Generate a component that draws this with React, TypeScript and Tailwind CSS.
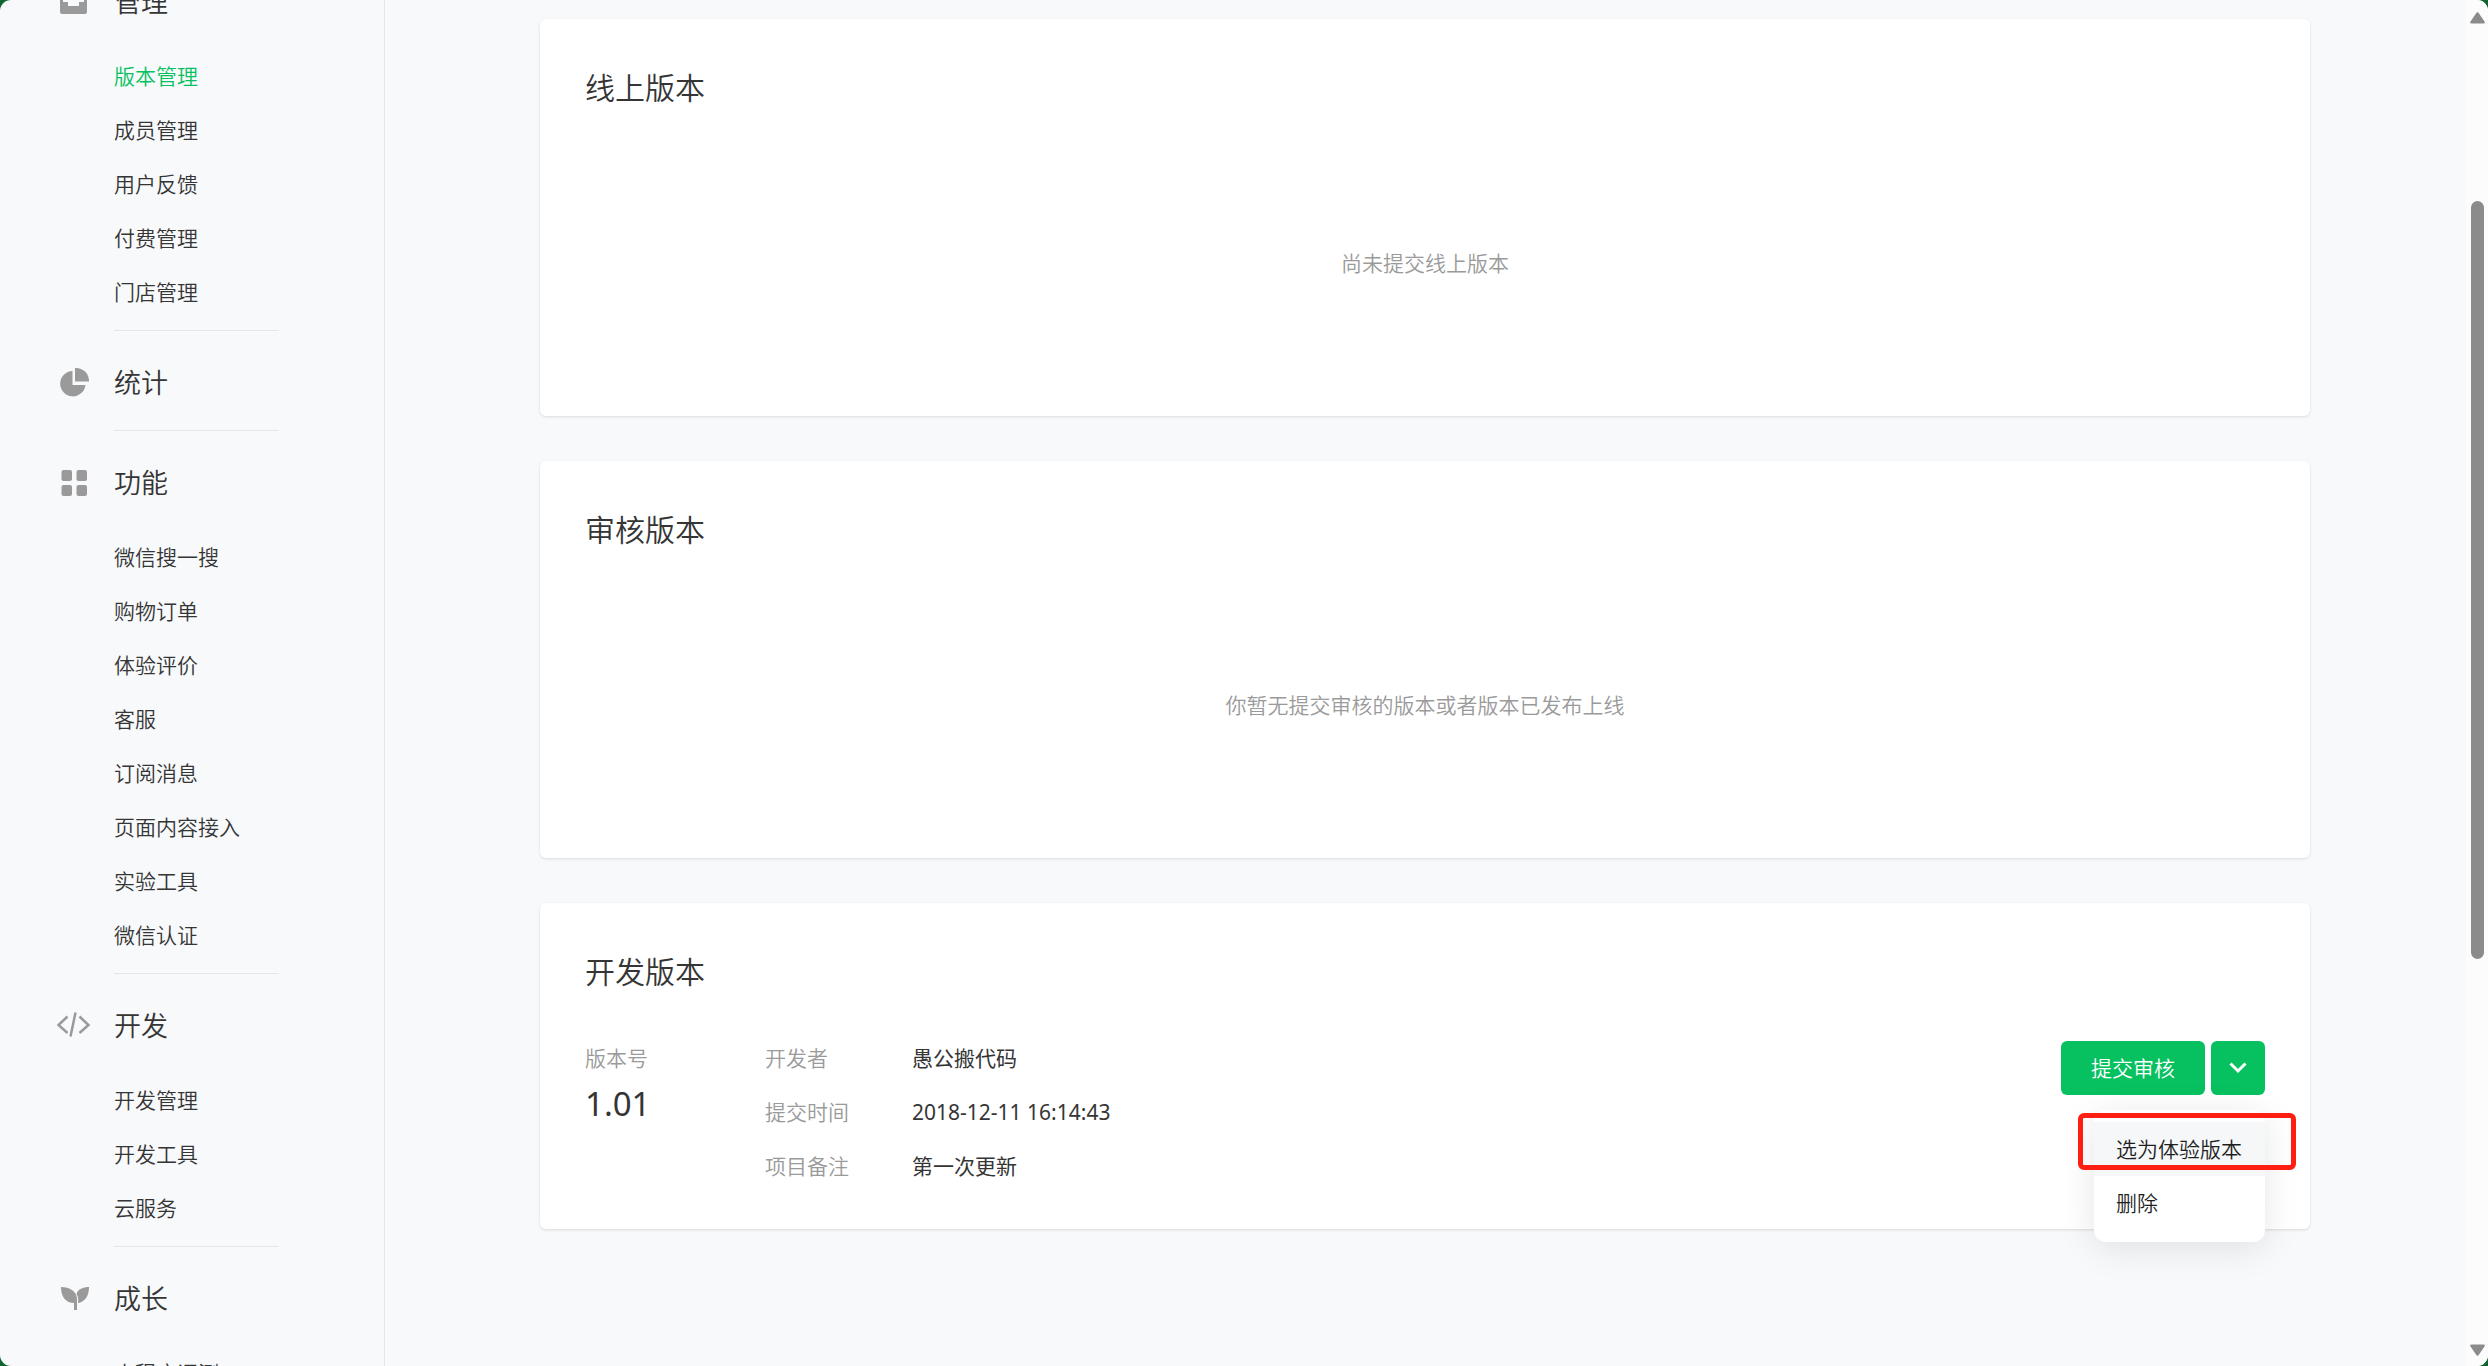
import { useState } from 'react'
import type { ReactNode } from 'react'

interface NavGroup {
  title: string
  icon: ReactNode
  items: string[]
}

interface VersionCardProps {
  title: string
  children: ReactNode
}

const navGroups: NavGroup[] = [
  {
    title: '管理',
    icon: (
      <path
        fillRule="evenodd"
        d="M2 1h23a2 2 0 0 1 2 2v22a2 2 0 0 1-2 2H2a2 2 0 0 1-2-2V3a2 2 0 0 1 2-2zM3 4v11h5v4h11v-4h5V4z"
      />
    ),
    items: ['版本管理', '成员管理', '用户反馈', '付费管理', '门店管理'],
  },
  {
    title: '统计',
    icon: (
      <>
        <path d="M12.500 3v14h13A12.700 12.700 0 1 1 12.500 3z" />
        <path d="M15 0a13 13 0 0 1 14 13.500H15z" />
      </>
    ),
    items: [],
  },
  {
    title: '功能',
    icon: (
      <>
        <rect x="1.500" y="2" width="10.500" height="11" rx="2" />
        <rect x="16.500" y="2" width="10.500" height="11" rx="2" />
        <rect x="1.500" y="17" width="10.500" height="11" rx="2" />
        <rect x="16.500" y="17" width="10.500" height="11" rx="2" />
      </>
    ),
    items: [
      '微信搜一搜',
      '购物订单',
      '体验评价',
      '客服',
      '订阅消息',
      '页面内容接入',
      '实验工具',
      '微信认证',
    ],
  },
  {
    title: '开发',
    icon: (
      <path
        d="M7.500 5.500L-1.500 14L7.500 22M15.500 1.500L10.500 25.500M19.500 5.500L28.500 14L19.500 22"
        fill="none"
        stroke="currentColor"
        strokeWidth="2.500"
      />
    ),
    items: ['开发管理', '开发工具', '云服务'],
  },
  {
    title: '成长',
    icon: (
      <>
        <path d="M1 3c9 0 15 4 16 11v12h-3v-7C6 19 1 13 1 3z" />
        <path d="M29 3c0 9-4 15-11 16C18.500 15 18 12 16.500 10C18 5 23 3 29 3z" />
      </>
    ),
    items: ['小程序评测'],
  },
]

const versionFields = [
  { label: '开发者', value: '愚公搬代码' },
  { label: '提交时间', value: '2018-12-11 16:14:43' },
  { label: '项目备注', value: '第一次更新' },
]

function Sidebar() {
  return (
    <nav className="w-[385px] shrink-0 overflow-hidden border-r border-[#e4e6e9]">
      <div className="-mt-[25px]">
        {navGroups.map((group, index) => (
          <section key={group.title} className="pl-[60px]">
            {index > 0 && <hr className="mb-[25px] ml-[54px] w-[165px] border-[#e4e6e9]" />}
            <h2 className="mb-5 flex h-[54px] items-center text-[27px] text-[#353535]">
              <svg
                viewBox="0 0 30 30"
                className="mr-6 h-[30px] w-[30px] overflow-visible text-[#9a9a9a]"
                fill="currentColor"
              >
                {group.icon}
              </svg>
              {group.title}
            </h2>
            {group.items.length > 0 && (
              <ul className="mb-[11px] ml-[54px]">
                {group.items.map((item) => (
                  <li key={item} className="flex h-[54px] items-center">
                    <a
                      href="#"
                      className={item === '版本管理' ? 'text-[#07c160]' : 'text-[#353535]'}
                    >
                      {item}
                    </a>
                  </li>
                ))}
              </ul>
            )}
          </section>
        ))}
      </div>
    </nav>
  )
}

function VersionCard({ title, children }: VersionCardProps) {
  return (
    <section className="rounded-md bg-white px-[45px] pt-[45px] pb-[46px] shadow-[0_1px_3px_rgba(0,0,0,0.12)]">
      <h2 className="text-[30px] leading-[48px] text-[#353535]">{title}</h2>
      {children}
    </section>
  )
}

function EmptyVersion({ text }: { text: string }) {
  return (
    <p className="flex h-[258px] items-center justify-center pt-11 text-[#9a9a9a]">{text}</p>
  )
}

function VersionActions() {
  const [open, setOpen] = useState(true)

  return (
    <div className="relative flex gap-1.5 self-start">
      <button type="button" className="h-[54px] w-36 rounded-md bg-[#07c160] text-white">
        提交审核
      </button>
      <button
        type="button"
        aria-label="更多操作"
        aria-expanded={open}
        onClick={() => setOpen(!open)}
        className="flex h-[54px] w-[54px] items-center justify-center rounded-md bg-[#07c160] text-white"
      >
        <svg viewBox="0 0 18 12" className="h-3 w-[18px]" fill="none" stroke="currentColor">
          <path d="M1.500 1.500L9 9L16.500 1.500" strokeWidth="3" />
        </svg>
      </button>
      {open && (
        <div className="absolute top-[69px] right-0 w-[171px] rounded-xl bg-white py-3 shadow-[0_6px_36px_rgba(0,0,0,0.1)]">
          <button
            type="button"
            className="h-[54px] w-full bg-[#f6f7f9] pl-[22px] text-left text-[#1f1f1f]"
          >
            选为体验版本
          </button>
          <button type="button" className="h-[54px] w-full pl-[22px] text-left text-[#1f1f1f]">
            删除
          </button>
          <div className="pointer-events-none absolute top-[3px] -right-[31px] h-[57px] w-[218px] rounded-md border-[5px] border-[#ff1e12]" />
        </div>
      )}
    </div>
  )
}

function Scrollbar() {
  return (
    <div className="flex w-[22px] shrink-0 flex-col items-center bg-[#fcfcfc] pt-3 pb-[10px] text-[#8b8b8b]">
      <svg viewBox="0 0 15 12" className="h-3 w-[15px]" fill="currentColor">
        <path d="M6 1.500q1.500-2.500 3 0l5.500 8q1 2-1 2h-12q-2 0-1-2z" />
      </svg>
      <div className="flex w-full flex-1 flex-col items-center pt-[177px]">
        <div className="h-[66.3%] w-[13px] rounded-full bg-[#8b8b8b]" />
      </div>
      <svg viewBox="0 0 15 12" className="h-3 w-[15px]" fill="currentColor">
        <path d="M6 10.500q1.500 2.500 3 0l5.500-8q1-2-1-2h-12q-2 0-1 2z" />
      </svg>
    </div>
  )
}

export default function App() {
  return (
    <div className="h-screen bg-[#0f6430] font-['Noto_Sans','Noto_Sans_CJK_SC',sans-serif] text-[21px] leading-[34px] font-[350]">
      <div className="flex h-full overflow-hidden rounded-[11px] bg-[#f8f9fb]">
        <Sidebar />
        <main className="flex min-w-0 flex-1 flex-col gap-[45px] pt-[19px] pr-[156px] pl-[155px]">
          <VersionCard title="线上版本">
            <EmptyVersion text="尚未提交线上版本" />
          </VersionCard>
          <VersionCard title="审核版本">
            <EmptyVersion text="你暂无提交审核的版本或者版本已发布上线" />
          </VersionCard>
          <VersionCard title="开发版本">
            <div className="mt-[45px] flex">
              <div className="w-[180px]">
                <p className="text-[#9a9a9a]">版本号</p>
                <p className="mt-0.5 text-[33px] leading-[54px] font-normal text-[#353535]">1.01</p>
              </div>
              <dl className="flex flex-1 flex-col gap-5">
                {versionFields.map((field) => (
                  <div key={field.label} className="flex">
                    <dt className="w-[147px] text-[#9a9a9a]">{field.label}</dt>
                    <dd className="font-normal text-[#353535]">{field.value}</dd>
                  </div>
                ))}
              </dl>
              <VersionActions />
            </div>
          </VersionCard>
        </main>
        <Scrollbar />
      </div>
    </div>
  )
}
